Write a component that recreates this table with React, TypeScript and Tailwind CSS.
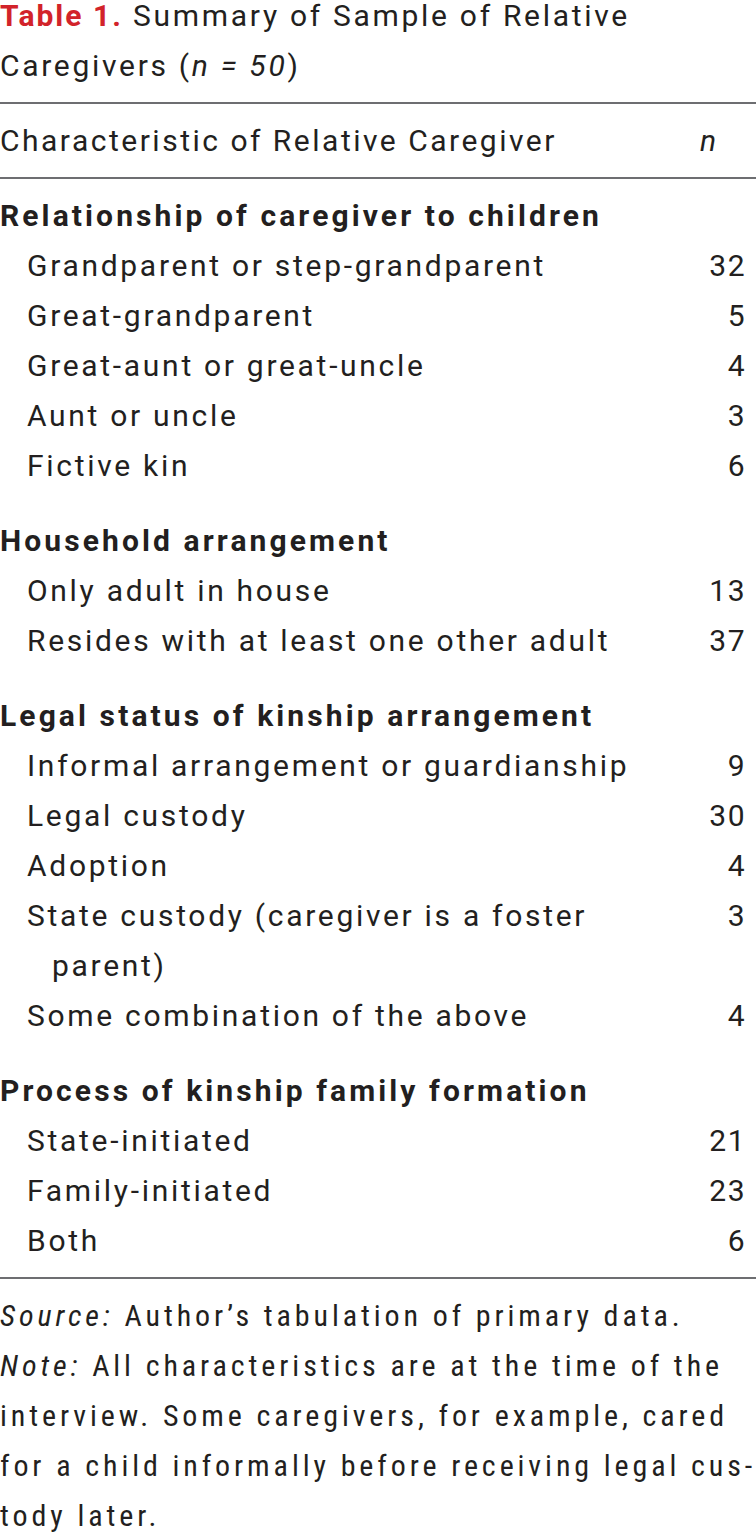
import React from "react";

type Section = { heading: string; rows: [string, string][] };

const sections: Section[] = [
  {
    heading: "Relationship of caregiver to children",
    rows: [
      ["Grandparent or step-grandparent", "32"],
      ["Great-grandparent", "5"],
      ["Great-aunt or great-uncle", "4"],
      ["Aunt or uncle", "3"],
      ["Fictive kin", "6"],
    ],
  },
  {
    heading: "Household arrangement",
    rows: [
      ["Only adult in house", "13"],
      ["Resides with at least one other adult", "37"],
    ],
  },
  {
    heading: "Legal status of kinship arrangement",
    rows: [
      ["Informal arrangement or guardianship", "9"],
      ["Legal custody", "30"],
      ["Adoption", "4"],
      ["State custody (caregiver is a foster parent)", "3"],
      ["Some combination of the above", "4"],
    ],
  },
  {
    heading: "Process of kinship family formation",
    rows: [
      ["State-initiated", "21"],
      ["Family-initiated", "23"],
      ["Both", "6"],
    ],
  },
];

export default function App() {
  return (
    <div className="w-[756px] bg-white text-[#231f20] font-['Roboto',sans-serif] text-[30px] leading-[50px] tracking-[2.7px]">
      {/* Caption */}
      <div className="-mt-[9px] whitespace-nowrap">
        <span className="font-bold text-[#d2232a] tracking-[2px]">Table 1.</span> Summary of Sample of Relative
        <br />
        Caregivers (<i>n = 50</i>)
      </div>

      {/* Table */}
      <div className="mt-[11px] border-t-2 border-[#6d6e71]">
        <div className="grid grid-cols-[1fr_56px] pt-[12px] pb-[11px] border-b-2 border-[#6d6e71]">
          <div className="tracking-[2.5px]">Characteristic of Relative Caregiver</div>
          <div className="italic">n</div>
        </div>

        <div className="pt-[12px] pb-[11px] border-b-2 border-[#6d6e71]">
          {sections.map((s, i) => (
            <div key={s.heading} className={i > 0 ? "mt-[25px]" : ""}>
              <div className="font-bold tracking-[3.1px]">{s.heading}</div>
              {s.rows.map(([label, n]) => (
                <div key={label} className="grid grid-cols-[1fr_80px] pr-[10px]">
                  <div className="pl-[52px] -indent-[25px]">{label}</div>
                  <div className="text-right tracking-[1.5px]">{n}</div>
                </div>
              ))}
            </div>
          ))}
        </div>
      </div>

      {/* Notes */}
      <div className="pt-[12px] font-['Roboto_Condensed','Liberation_Sans_Narrow',sans-serif] text-[30px] tracking-[3.9px] whitespace-nowrap">
        <p>
          <i>Source:</i> Author’s tabulation of primary data.
        </p>
        <p>
          <i>Note:</i> All characteristics are at the time of the
          <br />
          interview. Some caregivers, for example, cared
          <br />
          for a child informally before receiving legal cus-
          <br />
          tody later.
        </p>
      </div>
    </div>
  );
}
